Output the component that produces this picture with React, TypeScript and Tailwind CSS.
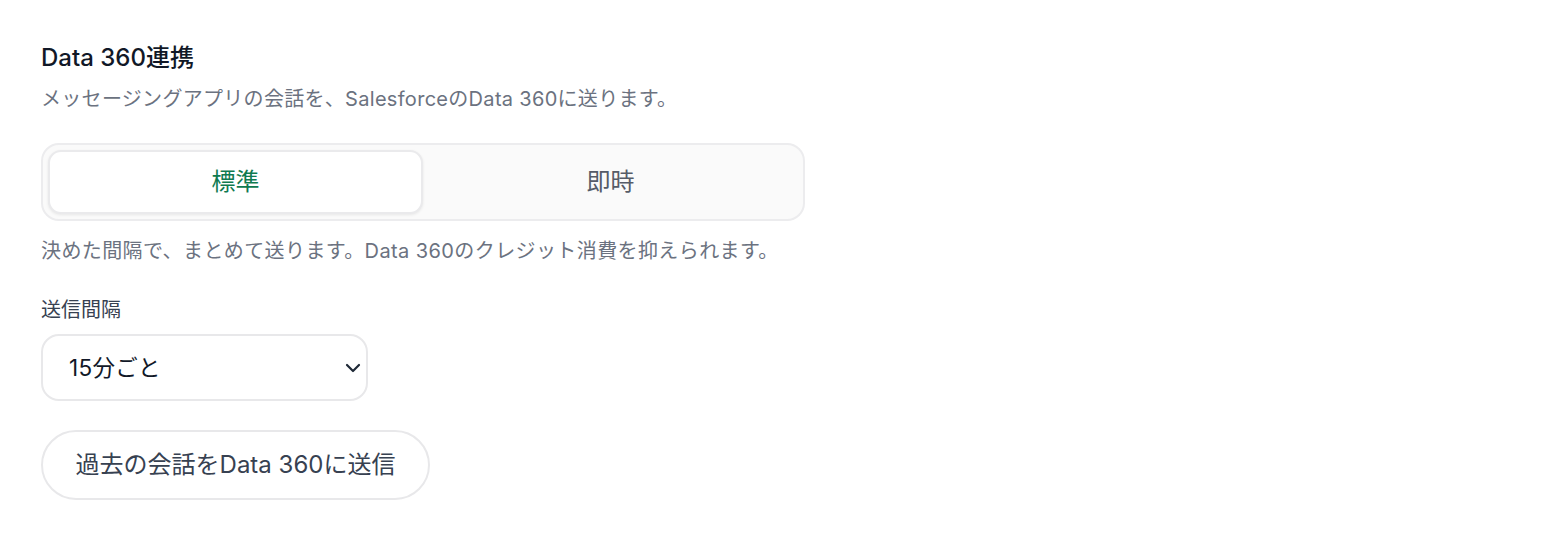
import React, { useState } from "react";

export default function App() {
  const [mode, setMode] = useState<"std" | "now">("std");
  return (
    <div
      className="min-h-screen bg-white pl-[41px] pt-[42px]"
      style={{ fontFamily: 'Inter, "Noto Sans CJK JP", sans-serif' }}
    >
      <h2 className="text-[24px] leading-[32px] font-medium text-[#111827]">Data 360連携</h2>
      <p className="mt-[11px] text-[20px] leading-[28px] tracking-[0.3px] text-[#6b7280]">
        メッセージングアプリの会話を、SalesforceのData 360に送ります。
      </p>

      <div className="mt-[30px] w-[764px] rounded-[18px] border-2 border-[#ececee] bg-[#fafafa] p-[5px] grid grid-cols-2">
        <button
          onClick={() => setMode("std")}
          className={
            mode === "std"
              ? "h-[64px] rounded-[13px] border-2 border-[#eaeaec] bg-white text-[24px] text-[#0f7a50] shadow-[0_1px_3px_rgba(0,0,0,0.08)]"
              : "h-[64px] rounded-[13px] text-[24px] text-[#565c68]"
          }
        >
          標準
        </button>
        <button
          onClick={() => setMode("now")}
          className={
            mode === "now"
              ? "h-[64px] rounded-[13px] border-2 border-[#eaeaec] bg-white text-[24px] text-[#0f7a50] shadow-[0_1px_3px_rgba(0,0,0,0.08)]"
              : "h-[64px] rounded-[13px] text-[24px] text-[#565c68]"
          }
        >
          即時
        </button>
      </div>

      <p className="mt-[16px] text-[20px] leading-[28px] tracking-[0.4px] text-[#6b7280]">
        決めた間隔で、まとめて送ります。Data 360のクレジット消費を抑えられます。
      </p>

      <div className="mt-[31px] text-[20px] leading-[28px] text-[#374151]">送信間隔</div>

      <div className="mt-[10px] flex h-[67px] w-[327px] items-center justify-between rounded-[18px] border-2 border-[#e8e8ea] bg-white pl-[26px] pr-[5px]">
        <span className="text-[22.5px] tracking-[0.3px] text-[#111827]">15分ごと</span>
        <svg width="16" height="10" viewBox="0 0 16 10" fill="none">
          <path d="M2 2l6 6 6-6" stroke="#1f2937" strokeWidth="2.2" strokeLinecap="round" strokeLinejoin="round" />
        </svg>
      </div>

      <button className="mt-[29px] flex h-[70px] w-[389px] items-center justify-center rounded-full border-2 border-[#e8e8ea] bg-white text-[24px] font-normal text-[#374151]">
        過去の会話をData 360に送信
      </button>
    </div>
  );
}
